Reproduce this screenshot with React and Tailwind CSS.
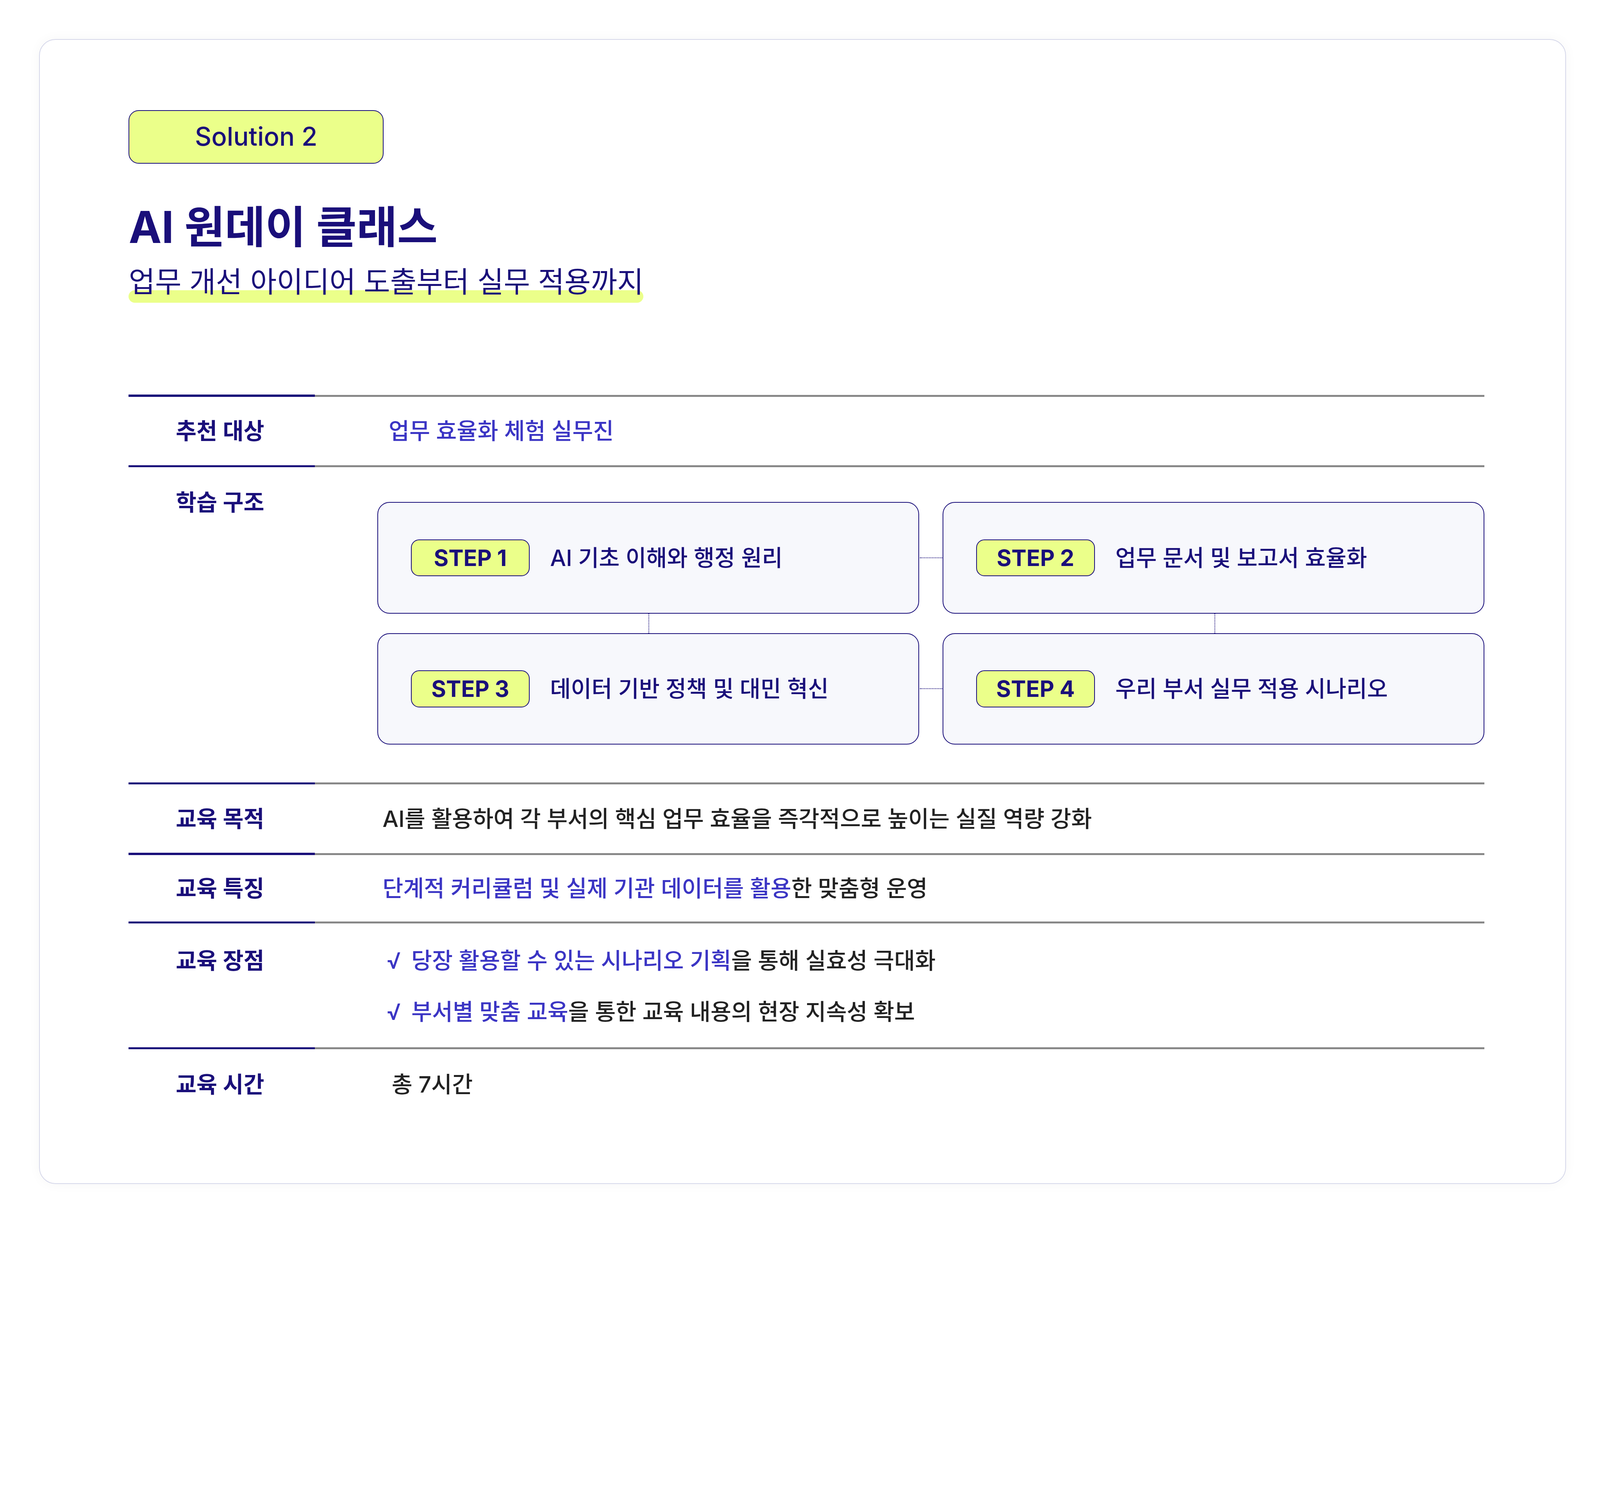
import React from 'react';

const steps = [
  { n: 'STEP 1', t: 'AI 기초 이해와 행정 원리' },
  { n: 'STEP 2', t: '업무 문서 및 보고서 효율화' },
  { n: 'STEP 3', t: '데이터 기반 정책 및 대민 혁신' },
  { n: 'STEP 4', t: '우리 부서 실무 적용 시나리오' },
];

const Row = ({ label, children, className = '' }) => (
  <div className="flex border-t-2 border-[#888888] relative">
    <div className="absolute -top-[2px] left-0 w-[182px] h-[2px] bg-[#1a0f7a]" />
    <div className={`w-[243px] shrink-0 pl-[46px] text-[22px] font-semibold text-[#1a0f7a] ${className}`}>{label}</div>
    <div className="flex-1">{children}</div>
  </div>
);

const StepBox = ({ s }) => (
  <div className="h-[109px] rounded-[12px] border border-[#1a0f7a] bg-[#f7f8fc] flex items-center pl-[32px] gap-[20px]">
    <span className="w-[116px] h-[36px] rounded-[8px] border border-[#1a0f7a] bg-[#ebff8a] flex items-center justify-center text-[22px] font-bold text-[#1a0f7a]">{s.n}</span>
    <span className="text-[22px] font-medium text-[#1a0f7a] whitespace-nowrap">{s.t}</span>
  </div>
);

export default function App() {
  return (
    <div className="w-[5040px] h-[3840px] bg-white overflow-hidden" style={{ fontFamily: 'Inter, "Noto Sans CJK KR", sans-serif' }}>
      <div className="[zoom:2.62] w-[1568px] h-[1195px] pt-[38px] px-[38px]">
        <div className="h-[1119px] rounded-[16px] border border-[#d6d8ea] shadow-[0_0_12px_rgba(0,0,0,0.04)] pl-[87px] pr-[79px] pt-[69px]">
          <div className="w-[249px] h-[52px] rounded-[10px] border border-[#1a0f7a] bg-[#ebff8a] flex items-center justify-center text-[25px] font-medium text-[#1a0f7a]">Solution 2</div>
          <h1 className="mt-[34px] text-[43px] font-bold text-[#1a0f7a] leading-[56px]">AI 원데이 클래스</h1>
          <div className="mt-[6px] relative inline-block">
            <div className="absolute left-0 right-0 bottom-[0px] h-[12px] rounded-full bg-[#ebff8a]" />
            <span className="relative text-[28px] text-[#1a0f7a] leading-[40px]">업무 개선 아이디어 도출부터 실무 적용까지</span>
          </div>
          <div className="mt-[90px]">
            <Row label="추천 대상" className="py-[17px]">
              <div className="py-[17px] pl-[11px] text-[22px] font-medium text-[#3b35c4]">업무 효율화 체험 실무진</div>
            </Row>
            <Row label="학습 구조" className="pt-[18px]">
              <div className="pt-[34px] pb-[37px] grid grid-cols-2 gap-x-[23px] gap-y-[19px] relative">
                {steps.map((s) => <StepBox key={s.n} s={s} />)}
                <div className="absolute left-[530px] top-[88px] w-[23px] border-t border-dotted border-[#1a0f7a]" />
                <div className="absolute left-[530px] top-[216px] w-[23px] border-t border-dotted border-[#1a0f7a]" />
                <div className="absolute left-[265px] top-[143px] h-[19px] border-l border-dotted border-[#1a0f7a]" />
                <div className="absolute left-[818px] top-[143px] h-[19px] border-l border-dotted border-[#1a0f7a]" />
              </div>
            </Row>
            <Row label="교육 목적" className="py-[17px]">
              <div className="py-[17px] pl-[5px] text-[22px] font-medium text-[#222222]">AI를 활용하여 각 부서의 핵심 업무 효율을 즉각적으로 높이는 실질 역량 강화</div>
            </Row>
            <Row label="교육 특징" className="py-[16px]">
              <div className="py-[16px] pl-[5px] text-[22px] font-medium text-[#222222]"><span className="text-[#3b35c4]">단계적 커리큘럼 및 실제 기관 데이터를 활용</span>한 맞춤형 운영</div>
            </Row>
            <Row label="교육 장점" className="pt-[20px]">
              <div className="pt-[20px] pb-[18px] pl-[9px] flex flex-col gap-[17px] text-[22px] font-medium text-[#222222]">
                <div><span className="text-[#3b35c4] mr-[10px]">√</span><span className="text-[#3b35c4]">당장 활용할 수 있는 시나리오 기획</span>을 통해 실효성 극대화</div>
                <div><span className="text-[#3b35c4] mr-[10px]">√</span><span className="text-[#3b35c4]">부서별 맞춤 교육</span>을 통한 교육 내용의 현장 지속성 확보</div>
              </div>
            </Row>
            <Row label="교육 시간" className="py-[18px]">
              <div className="py-[18px] pl-[14px] text-[22px] font-medium text-[#222222]">총 7시간</div>
            </Row>
          </div>
        </div>
      </div>
    </div>
  );
}
